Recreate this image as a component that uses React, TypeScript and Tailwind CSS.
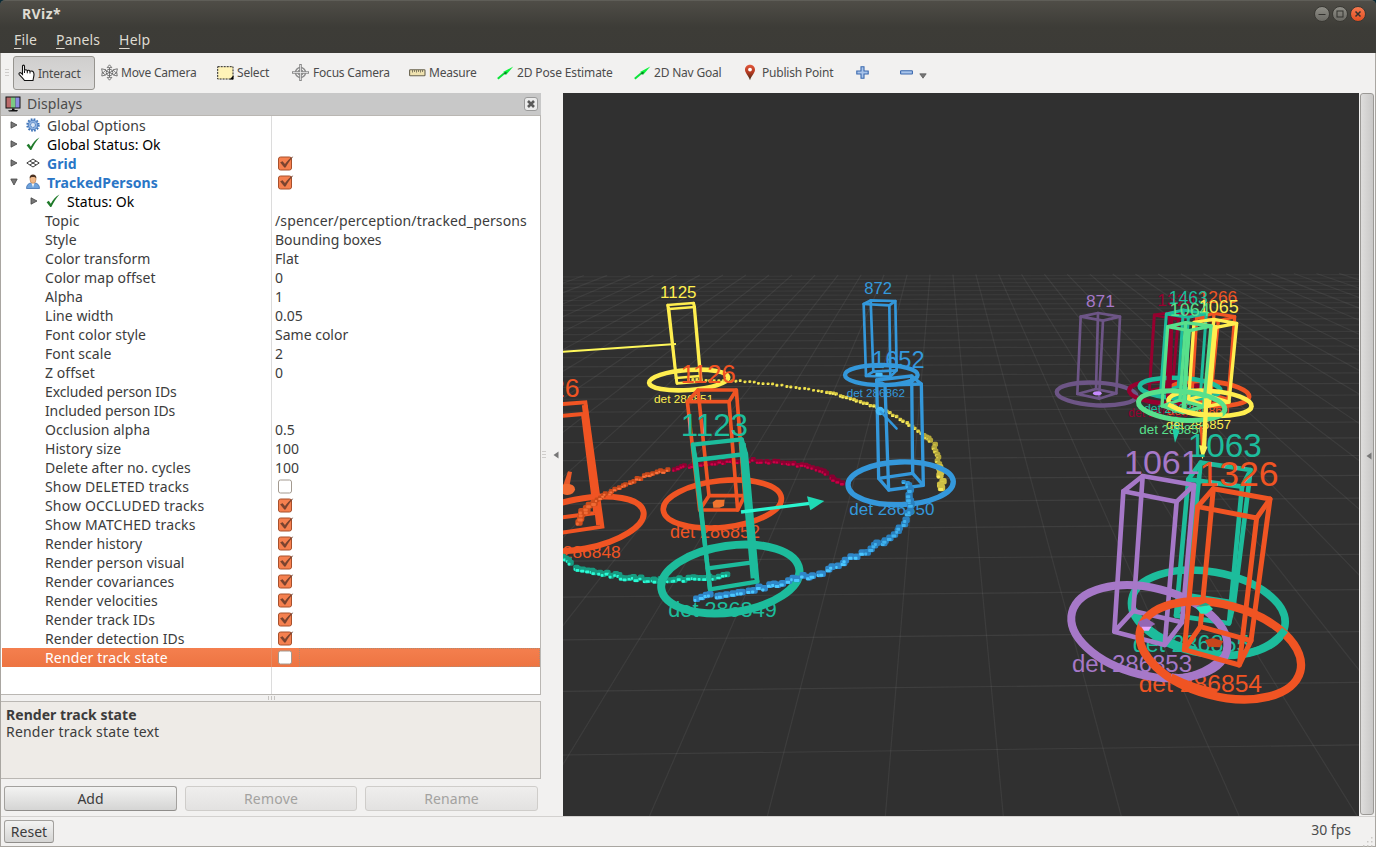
import React from "react";

const UI = "font-['Noto_Sans',sans-serif]";

/* ---------- small icons ---------- */

const Check = () => (
  <svg width="14" height="14" viewBox="0 0 14 14" className="-mt-[2px] shrink-0">
    <path d="M.6 8.300 2.800 6.800 4.800 9.800C6.800 6 9.500 2.700 13.400.5 10 4.500 7.500 8.500 5.300 13H4.300Z" fill="#1f7a2a" />
  </svg>
);

const Gear = () => (
  <svg width="14" height="14" viewBox="0 0 14 14" className="-mt-[2px] shrink-0">
    <circle cx="7" cy="7" r="5.700" fill="none" stroke="#3f74b8" strokeWidth="2" strokeDasharray="1.700 1.284" />
    <circle cx="7" cy="7" r="4.800" fill="#8fb2e0" stroke="#4a7cc0" strokeWidth="1" />
    <circle cx="7" cy="7" r="2.400" fill="#dbe7f6" stroke="#4a7cc0" strokeWidth="1" strokeDasharray="1.500 .6" />
  </svg>
);

const GridIcon = () => (
  <svg width="14" height="14" viewBox="0 0 14 14" className="-mt-[2px] shrink-0" fill="none" stroke="#3c3c3c">
    <path d="M.8 7 7 3 13.200 7 7 11ZM3.900 5 10.100 9M10.100 5 3.900 9" strokeWidth="1" />
  </svg>
);

const Person = () => (
  <svg width="14" height="16" viewBox="0 0 14 16" className="-mt-[2px] shrink-0">
    <path d="M.5 14.500C.5 11 2.500 9.300 5 9L7 10.500 9 9C11.500 9.300 13.500 11 13.500 14.500Z" fill="#6fa3dc" stroke="#3d6fb0" strokeWidth=".8" />
    <path d="M5.300 8.500h3.400L7 13.500Z" fill="#f4f4f4" />
    <ellipse cx="7" cy="5.300" rx="3" ry="4" fill="#f0b98a" stroke="#b97a45" strokeWidth=".6" />
    <path d="M3.600 4.600C3.400 1.800 5 .6 7 .6S10.600 1.800 10.400 4.600C9.500 3 8.500 3 7 3S4.500 3 3.600 4.600Z" fill="#4a3222" />
  </svg>
);

const Right = () => (
  <svg width="8" height="8" viewBox="0 0 8 8" className="-mt-px shrink-0">
    <path d="M1 .8 7 4 1 7.200Z" fill="#777" stroke="#444" strokeWidth=".8" />
  </svg>
);
const Down = () => (
  <svg width="8" height="8" viewBox="0 0 8 8" className="-mt-[2px] shrink-0">
    <path d="M.8 1h6.400L4 7Z" fill="#777" stroke="#444" strokeWidth=".8" />
  </svg>
);

const Box = ({ on }: { on: boolean }) => (
  <svg width="17" height="17" viewBox="0 0 17 17" className="-mt-px block shrink-0">
    <rect x="1.500" y="2" width="13" height="13" rx="2" fill={on ? "#f5804f" : "#fff"} stroke={on ? "#a8502c" : "#a39a90"} />
    {on && (
      <path d="M3.500 7.500 5.500 6.500 8 9.500C9.800 6.800 12 4.200 15.800 1.800 12.500 5.500 10.200 9 8.400 12.300H7.400Z" fill="#7a4330" stroke="#5e3526" strokeWidth=".4" />
    )}
  </svg>
);

const Monitor = () => (
  <svg width="17" height="17" viewBox="0 0 17 17">
    <rect x=".5" y=".5" width="15" height="12" fill="#111" />
    <path d="M1.500 1.500H6V11.500H1.500Z" fill="#b96a6a" />
    <path d="M6 1.500h4.500V11.500H6Z" fill="#7cc983" />
    <path d="M10.500 1.500h4V11.500h-4Z" fill="#8b8be0" />
    <path d="M7 12.500h2.500V14H13l-1 1.500H4L3 14.500 7 14Z" fill="#111" />
  </svg>
);

const Hand = () => (
  <svg width="17" height="18" viewBox="0 0 17 18">
    <path
      d="M4.500 9.500V2.200C4.500 .8 6.500 .8 6.500 2.200V6.500C7 5.500 9 5.500 9.300 6.800 10 5.900 11.700 6.200 12 7.400 13 6.700 15 7 15.500 8.200L16 10C16 12.500 15.500 13 15 16.500H6.500C5 14 2.500 12 1.200 10.500.5 9 2 8 3.200 9.200L4.500 10.500Z"
      fill="#fff"
      stroke="#111"
      strokeWidth="1.100"
    />
    <path d="M6.500 6.500V9M9.300 7V9.300M12 7.400V9.500" stroke="#111" fill="none" />
  </svg>
);

const Move = () => (
  <svg width="17" height="17" viewBox="0 0 17 17" fill="#f7f7f7" stroke="#5a5a5a" strokeWidth=".8">
    <path d="M8.500 .8 10.800 3.600H6.200ZM8.500 16.200 6.200 13.400h4.600Z" />
    <path d="M.6 4.800 5 5.800 1.600 9.200ZM16.400 4.800 12 5.800 15.400 9.200Z" />
    <path d="M.8 12 1.200 8.600 4.600 11ZM16.200 12 15.800 8.600 12.400 11Z" />
    <circle cx="8.500" cy="8.500" r="3.300" />
    <path d="M4.500 6.700 12.500 10.300M12.500 6.700 4.500 10.300M8.500 4V13" fill="none" />
  </svg>
);

const SelectIcon = () => (
  <svg width="17" height="14" viewBox="0 0 17 14">
    <rect x=".7" y=".7" width="15.300" height="12.300" fill="#fff3b8" stroke="#222" strokeWidth="1" strokeDasharray="2 1" />
    <path d="M16.500 9.500V13.500H12.500Z" fill="#000" />
  </svg>
);

const Focus = () => (
  <svg width="17" height="17" viewBox="0 0 17 17" fill="none" stroke="#8a8a8a">
    <circle cx="8.500" cy="8.500" r="5" strokeWidth="1.400" />
    <circle cx="8.500" cy="8.500" r="2.500" strokeWidth="1.100" />
    <path d="M8.500 0V17M0 8.500H17" strokeWidth="2.600" />
    <path d="M8.500 1V16M1 8.500H16" stroke="#eee" strokeWidth=".8" />
  </svg>
);

const Ruler = () => (
  <svg width="17" height="8" viewBox="0 0 17 8">
    <rect x=".6" y=".8" width="15.400" height="6" rx=".8" fill="#efe2b0" stroke="#6a6450" strokeWidth="1.100" />
    <path d="M3.500 1V3.500M5.500 1V3M7.500 1V3.500M9.500 1V3M11.500 1V3.500M13.500 1V3" stroke="#6a6450" strokeWidth=".8" />
  </svg>
);

const GreenArrow = () => (
  <svg width="17" height="14" viewBox="0 0 17 14">
    <path d="M.8 12.800 7 7.500" stroke="#0be33a" strokeWidth="2" />
    <path d="M6 6 16.300 .6 9.200 8.800Z" fill="#0bf23a" />
    <path d="M6.500 8 8 6 10 6.200 8.600 8.400Z" fill="#0a7c26" />
  </svg>
);

const Pin = () => (
  <svg width="12" height="17" viewBox="0 0 12 17">
    <defs>
      <linearGradient id="pin" x1="0" y1="0" x2="0" y2="1">
        <stop offset="0" stopColor="#e2573a" />
        <stop offset=".5" stopColor="#b23a22" />
        <stop offset="1" stopColor="#3c2a14" />
      </linearGradient>
    </defs>
    <path d="M6 .8C3 .8 1 3 1 5.800 1 9 4.500 11.500 6 16.300 7.500 11.500 11 9 11 5.800 11 3 9 .8 6 .8Z" fill="url(#pin)" />
    <circle cx="6" cy="5.600" r="1.900" fill="#fff" />
  </svg>
);

const Plus = () => (
  <svg width="13" height="13" viewBox="0 0 13 13">
    <path d="M5 .8h3V5h4.200v3H8v4.200H5V8H.8V5H5Z" fill="#a9c4ea" stroke="#3a68ae" strokeWidth="1.100" />
  </svg>
);
const Minus = () => (
  <svg width="13" height="5" viewBox="0 0 13 5" className="block">
    <rect x=".6" y=".8" width="11.800" height="3.200" rx=".5" fill="#a9c4ea" stroke="#3a68ae" strokeWidth="1.100" />
  </svg>
);

/* ---------- property tree ---------- */

type Row = {
  label: string;
  value?: string;
  check?: boolean;
  kind?: "options" | "status" | "grid" | "persons" | "substatus";
};

const rows: Row[] = [
  { label: "Global Options", kind: "options" },
  { label: "Global Status: Ok", kind: "status" },
  { label: "Grid", kind: "grid", check: true },
  { label: "TrackedPersons", kind: "persons", check: true },
  { label: "Status: Ok", kind: "substatus" },
  { label: "Topic", value: "/spencer/perception/tracked_persons" },
  { label: "Style", value: "Bounding boxes" },
  { label: "Color transform", value: "Flat" },
  { label: "Color map offset", value: "0" },
  { label: "Alpha", value: "1" },
  { label: "Line width", value: "0.05" },
  { label: "Font color style", value: "Same color" },
  { label: "Font scale", value: "2" },
  { label: "Z offset", value: "0" },
  { label: "Excluded person IDs" },
  { label: "Included person IDs" },
  { label: "Occlusion alpha", value: "0.5" },
  { label: "History size", value: "100" },
  { label: "Delete after no. cycles", value: "100" },
  { label: "Show DELETED tracks", check: false },
  { label: "Show OCCLUDED tracks", check: true },
  { label: "Show MATCHED tracks", check: true },
  { label: "Render history", check: true },
  { label: "Render person visual", check: true },
  { label: "Render covariances", check: true },
  { label: "Render velocities", check: true },
  { label: "Render track IDs", check: true },
  { label: "Render detection IDs", check: true },
  { label: "Render track state", check: false },
];

const TreeRow = ({ row, selected }: { row: Row; selected: boolean }) => {
  const pad = !row.kind ? "pl-[43px]" : row.kind === "substatus" ? "pl-[28px]" : "pl-[8px]";
  const tone = selected
    ? "text-white"
    : row.kind === "status" || row.kind === "substatus"
      ? "text-black"
      : row.kind === "grid" || row.kind === "persons"
        ? "font-bold text-[#2a76c6]"
        : "text-[#3c3c3c]";
  const tracking = row.label.startsWith("Show") || row.label.startsWith("Render track state")
    ? "tracking-[0.16px]"
    : row.label.endsWith("person IDs")
      ? "tracking-[-0.13px]"
      : "tracking-[0.05px]";
  return (
    <div className={`flex h-[19px] shrink-0 ${selected ? "bg-linear-to-b from-[#f47f4e] to-[#ed7442]" : ""}`}>
      <div className={`flex w-[269px] items-center ${pad} ${tone} ${tracking}`}>
        {row.kind && (
          <span className="mr-[7px] flex items-center gap-[8px]">
            {row.kind === "persons" ? <Down /> : <Right />}
            {row.kind === "options" && <Gear />}
            {(row.kind === "status" || row.kind === "substatus") && <Check />}
            {row.kind === "grid" && <GridIcon />}
            {row.kind === "persons" && <Person />}
          </span>
        )}
        <span className="whitespace-nowrap">{row.label}</span>
      </div>
      <div className={`w-px ${selected ? "bg-[#e58a62]" : "bg-[#dcdcdc]"}`} />
      <div className="flex flex-1 items-center pl-[3px] text-[#3c3c3c]">
        {row.value && (
          <span className={`whitespace-nowrap ${row.value.length > 20 ? "tracking-[0.14px]" : ""}`}>{row.value}</span>
        )}
        {row.check !== undefined && (
          <span className="pl-[2px]">
            <Box on={row.check} />
          </span>
        )}
        {selected && <span className="ml-[5px] h-[19px] flex-1 border border-dotted border-[#b08a72]" />}
      </div>
    </div>
  );
};

/* ---------- 3D view ---------- */

type P = [number, number];

const noise = (i: number) => {
  const s = Math.sin(i * 127.1 + 11.7) * 43758.5453;
  return s - Math.floor(s);
};

const Trail = ({ pts, size, gap, dark, light, jitter = 0.5 }: { pts: P[]; size: number; gap: number; dark: string; light: string; jitter?: number }) => {
  const out: React.ReactNode[] = [];
  let n = 0;
  for (let i = 0; i < pts.length - 1; i++) {
    const [x0, y0] = pts[i];
    const [x1, y1] = pts[i + 1];
    const steps = Math.max(1, Math.round(Math.hypot(x1 - x0, y1 - y0) / gap));
    for (let k = 0; k < steps; k++) {
      const x = x0 + ((x1 - x0) * k) / steps + (noise(n) - 0.5) * size * jitter;
      const y = y0 + ((y1 - y0) * k) / steps + (noise(n + 500) - 0.5) * size * jitter;
      const lit = 0.35 + noise(n + 900) * 0.5;
      out.push(
        <g key={n}>
          <rect x={x - size * 0.55} y={y - size * 0.5} width={size * 1.1} height={size} rx={size * 0.3} fill={dark} />
          <rect x={x - size * 0.45} y={y + size * 0.02} width={size * lit} height={size * 0.45} rx={size * 0.12} fill={light} />
        </g>,
      );
      n++;
    }
  }
  return <g>{out}</g>;
};

/* Wireframe box: four top corners and the four floor corners below them. */
const Wire = ({ t, b, c, w }: { t: P[]; b: P[]; c: string; w: number }) => {
  const s = (q: P[]) => q.map((p) => p.join(",")).join(" ");
  return (
    <g fill="none" stroke={c} strokeWidth={w} strokeLinejoin="round" strokeLinecap="round">
      <polygon points={s(t)} />
      <polygon points={s(b)} />
      {t.map((p, i) => (
        <line key={i} x1={p[0]} y1={p[1]} x2={b[i][0]} y2={b[i][1]} />
      ))}
    </g>
  );
};

const Ring = ({ x, y, rx, ry, r = 0, c, w }: { x: number; y: number; rx: number; ry: number; r?: number; c: string; w: number }) => (
  <ellipse cx={x} cy={y} rx={rx} ry={ry} transform={`rotate(${r} ${x} ${y})`} fill="none" stroke={c} strokeWidth={w} />
);

const T = ({ x, y, s, c, end, children }: { x: number; y: number; s: number; c: string; end?: boolean; children: string }) => (
  <text x={x} y={y} fontSize={s} fill={c} textAnchor={end ? "end" : "start"} fontFamily="Liberation Sans, sans-serif">
    {children}
  </text>
);

const YEL = "#ffee4f";
const ORG = "#f05423";
const TEAL = "#1dbc9c";
const BLUE = "#3498db";
const PUR = "#a678c8";
const DIM = "#6d5586";
const CRI = "#96002f";
const GRN = "#58e08c";

const GridFloor = () => {
  const h: React.ReactNode[] = [];
  for (let n = -1; n < 32; n++) {
    const d = 1 / (0.001653 + 0.000192 * n);
    const slope = 0.000021 * d;
    const y = 144 + d;
    h.push(<line key={n} x1={563} x2={1359} y1={y + 477 * slope} y2={y - 319 * slope} strokeOpacity={Math.min(0.13, 0.05 + d * 0.00028)} />);
  }
  const v: React.ReactNode[] = [];
  for (let n = -24; n < 24; n++) {
    const m = 0.093 + 0.1755 * n;
    const far = 130.5 - m * 0.35;
    v.push(<line key={n} x1={940.8 + m * far} y1={144 + far} x2={940.8 + m * 676} y2={820} strokeOpacity=".115" />);
  }
  return (
    <g stroke="#a0a0a0" strokeWidth="1.200">
      {h}
      {v}
    </g>
  );
};

const Scene = () => (
  <svg width="796" height="723" viewBox="563 93 796 723" className="block">
    <rect x="563" y="93" width="796" height="723" fill="#303030" />
    <GridFloor />

    {/* upper left and centre tracks */}
    <g transform="translate(660 270) scale(.33333)">
      {/* 1125 */}
      <T x={0} y={84} s={51} c={YEL}>1125</T>
      <line x1="-300" y1="246" x2="48" y2="222" stroke="#fff85a" strokeWidth="6" />
      <Wire t={[[23, 105], [101, 99], [104, 111], [27, 117]]} b={[[48, 324], [120, 318], [124, 334], [51, 340]]} c={YEL} w={8} />
      <T x={-18} y={399} s={35.500} c={YEL}>det 286851</T>
      <Ring x={86} y={330} rx={119} ry={30} r={-4} c={YEL} w={14} />
      <Trail size={8} gap={13} dark="#e6d742" light="#fff46a" jitter={0.4} pts={[[85, 328], [240, 333], [310, 340], [380, 348], [500, 366]]} />
      <Trail size={10} gap={11} dark="#d9ca42" light="#fff46a" jitter={0.4} pts={[[500, 366], [560, 381], [610, 398], [680, 424], [740, 458], [790, 495]]} />
      <Trail size={15} gap={10} dark="#b3a63c" light="#e6d850" pts={[[790, 495], [822, 520], [832, 560], [837, 590]]} />
      <Trail size={20} gap={9} dark="#cfc044" light="#f7e95c" pts={[[837, 590], [844, 620], [845, 660]]} />

      {/* partial track at the left border */}
      <T x={-241} y={380} s={80} c={ORG} end>1226</T>
      <g fill="none" stroke={ORG} strokeWidth="12">
        <path d="M-300 403-224 397-173 770-300 789M-300 438-231 432M-300 743-194 729M-231 432-194 729" />
        <path d="M-226 405-183 765" strokeWidth="17" />
      </g>
      <path d="M-276 604-264 606-272 650-290 645Z" fill="#e8592a" />
      <ellipse cx="-278" cy="658" rx="23" ry="17" fill="#f06a32" />
      <T x={-118} y={863} s={52} c={ORG} end>det 286848</T>
      <Ring x={-238} y={762} rx={192} ry={75} r={-11} c={ORG} w={18} />
      <Trail size={20} gap={11} dark="#cf4d1c" light="#f06a34" pts={[[-245, 755], [-230, 728], [-212, 702], [-190, 688]]} />
      <Trail size={14} gap={11} dark="#c9481a" light="#f7733e" pts={[[-190, 688], [-170, 680], [-135, 655], [-80, 632], [-20, 608], [35, 600]]} />

      <Trail size={14} gap={12} dark="#8f0031" light="#d0004a" pts={[[42, 597], [110, 582], [200, 575], [280, 571], [380, 578], [470, 595]]} />
      <Trail size={16} gap={12} dark="#850030" light="#c80046" pts={[[470, 595], [555, 642]]} />

      {/* 1126 */}
      <T x={62} y={340} s={77} c={ORG}>1126</T>
      <Wire t={[[82, 395], [114, 360], [229, 360], [207, 395]]} b={[[119, 720], [147, 677], [254, 677], [233, 720]]} c={ORG} w={11} />
      <T x={30} y={803} s={54} c={ORG}>det 286852</T>
      <Ring x={187} y={702} rx={178} ry={70} r={-6} c={ORG} w={17} />
      <path d="M158 697 168 689H194L192 708 178 713H160Z" fill="#f0742f" />

      {/* teal history and 1123 */}
      <Trail size={18} gap={12} dark="#179a80" light="#2afbd5" pts={[[-294, 858], [-255, 890], [-160, 912], [-90, 924], [0, 930], [60, 928], [160, 922]]} />
      <T x={62} y={497} s={94} c={TEAL}>1123</T>
      <T x={25} y={1040} s={65} c={TEAL}>det 286849</T>
      <Wire t={[[99, 524], [245, 508], [258, 552], [107, 570]]} b={[[143, 895], [278, 877], [292, 935], [150, 958]]} c={TEAL} w={13} />
      <path d="M247 520 282 925" stroke={TEAL} strokeWidth="20" />
      <Ring x={211} y={927} rx={209} ry={100} r={-8} c={TEAL} w={24} />
      <Trail size={17} gap={16} dark="#1a9a82" light="#2afbd5" pts={[[160, 922], [220, 915]]} />
      <path d="M243 726 450 700" stroke="#2bf5cf" strokeWidth="10" />
      <path d="M441 679 493 693 451 721Z" fill="#1fd9b4" />

      {/* 872 */}
      <T x={613} y={73} s={50} c={BLUE}>872</T>
      <Wire t={[[611, 102], [632, 91], [706, 93], [688, 106]]} b={[[618, 318], [640, 305], [710, 301], [691, 320]]} c={BLUE} w={8} />
      <T x={560} y={381} s={35} c={BLUE}>det 286862</T>
      <Ring x={664} y={315} rx={109} ry={30} c={BLUE} w={13} />
      <rect x="646" y="308" width="22" height="11" rx="4" fill="#45b8f5" />

      {/* 1652 */}
      <T x={636} y={295} s={71} c={BLUE}>1652</T>
      <Wire t={[[650, 330], [755, 318], [784, 342], [675, 345]]} b={[[656, 625], [758, 610], [790, 646], [686, 660]]} c={BLUE} w={10} />
      <circle cx="660" cy="423" r="13" fill="#45b8f5" />
      <path d="M662 425 710 476" stroke={BLUE} strokeWidth="7" strokeLinecap="round" />
      <T x={568} y={735} s={51} c={BLUE}>det 286850</T>
      <Ring x={722} y={640} rx={158} ry={64} r={-2} c={BLUE} w={16} />
      <Trail size={20} gap={15} dark="#2f86c8" light="#4bc8ff" pts={[[108, 984], [200, 970], [280, 958], [340, 945], [430, 920], [490, 908], [560, 870], [620, 845]]} />
      <Trail size={20} gap={13} dark="#2a80be" light="#3fb2ee" pts={[[620, 845], [690, 800], [730, 760], [748, 720], [750, 660], [742, 640]]} />
      <Trail size={12} gap={10} dark="#2f8fd0" light="#3fb2ee" pts={[[742, 638], [718, 635]]} />
    </g>

    {/* upper right cluster */}
    <g transform="translate(1040 270) scale(.33333)">
      <T x={138} y={110} s={52} c={PUR}>871</T>
      <Wire t={[[122, 140], [174, 129], [240, 140], [189, 152]]} b={[[112, 372], [168, 357], [229, 370], [177, 386]]} c={DIM} w={8} />
      <Ring x={170} y={372} rx={120} ry={34} r={3} c={DIM} w={13} />
      <ellipse cx="172" cy="370" rx="13" ry="6" fill="#c68aff" />

      <T x={352} y={108} s={52} c={CRI}>1324</T>
      <T x={265} y={441} s={36} c={CRI}>det 286859</T>
      <Wire t={[[343, 135], [392, 128], [465, 138], [415, 148]]} b={[[328, 362], [380, 350], [450, 362], [394, 388]]} c={CRI} w={9} />
      <Ring x={385} y={367} rx={118} ry={34} r={3} c={CRI} w={13} />

      <T x={476} y={100} s={52} c={ORG}>1266</T>
      <T x={382} y={436} s={37} c={ORG}>det 286860</T>
      <Wire t={[[470, 143], [522, 130], [584, 140], [535, 153]]} b={[[455, 385], [505, 370], [564, 388], [510, 402]]} c={ORG} w={10} />
      <Ring x={508} y={370} rx={120} ry={36} r={5} c={ORG} w={14} />

      <T x={386} y={103} s={53} c={TEAL}>1463</T>
      <T x={312} y={430} s={37} c={TEAL}>det 286861</T>
      <Wire t={[[379, 132], [430, 120], [499, 131], [445, 142]]} b={[[362, 365], [415, 350], [482, 365], [430, 385]]} c={TEAL} w={9} />
      <Ring x={420} y={355} rx={121} ry={31} r={3} c={TEAL} w={14} />

      <path d="M392 148 386 385" stroke={CRI} strokeWidth="16" />
      <path d="M408 440V485" stroke={TEAL} strokeWidth="8" />

      <T x={476} y={130} s={54} c={YEL}>1065</T>
      <T x={378} y={477} s={39} c={YEL}>det 286857</T>
      <Wire t={[[462, 157], [522, 148], [590, 160], [528, 172]]} b={[[446, 388], [498, 375], [567, 396], [500, 410]]} c={YEL} w={10} />
      <path d="M524 165 504 405" stroke={YEL} strokeWidth="17" />
      <Ring x={510} y={400} rx={125} ry={37} r={4} c={YEL} w={14} />

      <T x={389} y={138} s={54} c={GRN}>1064</T>
      <T x={298} y={492} s={40} c={GRN}>det 286856</T>
      <Wire t={[[383, 170], [437, 158], [513, 168], [448, 182]]} b={[[366, 408], [420, 390], [491, 410], [428, 428]]} c={GRN} w={10} />
      <path d="M444 180 432 425" stroke={GRN} strokeWidth="12" />
      <Ring x={425} y={407} rx={130} ry={43} r={5} c={GRN} w={15} />
      <path d="M385 403C420 425 480 436 548 434" stroke={YEL} strokeWidth="13" fill="none" />
      <path d="M397 477 419 482 405 518Z" fill="#20d0a8" />
      <path d="M483 470 487 535" stroke={ORG} strokeWidth="8" />
      <path d="M499 385 492 535" stroke={YEL} strokeWidth="13" />
      <path d="M477 525 503 530 487 568Z" fill="#fff35a" />
    </g>

    {/* lower right cluster */}
    <g transform="translate(1040 430) scale(.33333)">
      <T x={443} y={81} s={100} c={TEAL}>1063</T>
      <T x={278} y={667} s={70} c={TEAL}>det 286855</T>
      <T x={96} y={725} s={72} c={PUR}>det 286853</T>
      <T x={296} y={785} s={74} c={ORG}>det 286854</T>
      <Wire t={[[482, 98], [632, 120], [606, 170], [445, 148]]} b={[[440, 495], [582, 518], [567, 580], [408, 557]]} c={TEAL} w={14} />
      <Ring x={505} y={548} rx={233} ry={123} r={10} c={TEAL} w={23} />
      <Ring x={328} y={605} rx={239} ry={131} r={14} c={PUR} w={24} />
      <path d="M277 535C315 600 370 640 470 662" stroke={TEAL} strokeWidth="22" fill="none" />
      <Wire t={[[308, 138], [462, 165], [410, 215], [250, 184]]} b={[[280, 543], [426, 577], [374, 645], [223, 605]]} c={PUR} w={14} />
      <T x={252} y={131} s={102} c={PUR}>1061</T>
      <Ring x={541} y={661} rx={248} ry={137} r={15} c={ORG} w={25} />
      <path d="M393 741C440 750 500 730 556 678" stroke={PUR} strokeWidth="23" fill="none" />
      <path d="M393 741C440 765 480 778 530 788" stroke={ORG} strokeWidth="22" fill="none" />
      <path d="M735 600C705 640 655 668 600 673" stroke={TEAL} strokeWidth="22" fill="none" />
      <Wire t={[[520, 176], [690, 207], [650, 264], [473, 230]]} b={[[481, 590], [633, 632], [598, 705], [433, 659]]} c={ORG} w={15} />
      <T x={478} y={169} s={107} c={ORG}>1326</T>
      <path d="M468 530 497 518 510 526Z" fill="#1aa88c" />
      <path d="M468 532 508 526 519 537 500 551H482Z" fill="#24e6bd" />
      <path d="M293 576 320 565 346 582 330 592H302Z" fill="#9466b4" />
      <path d="M304 590H334L326 602H312Z" fill="#e6a8ff" />
      <path d="M495 630 520 624 550 634 540 652 505 650Z" fill="#c8451c" />
    </g>
  </svg>
);

/* ---------- chrome ---------- */

const WinBtn = ({ close, children }: { close?: boolean; children: React.ReactNode }) => (
  <span
    className={`flex size-[16px] items-center justify-center rounded-full border border-[#3a3934] ${
      close ? "bg-linear-to-b from-[#f6794f] to-[#e24e20]" : "bg-linear-to-b from-[#8f8e87] to-[#6a6963]"
    }`}
  >
    <svg width="8" height="8" viewBox="0 0 8 8" fill="none" stroke="#33322e" strokeWidth="1">
      {children}
    </svg>
  </span>
);

const Tool = ({ icon, label, className }: { icon: React.ReactNode; label: string; className: string }) => (
  <div className={`flex items-center ${className}`}>
    {icon}
    <span className="whitespace-nowrap">{label}</span>
  </div>
);

const Button = ({ label, disabled, className }: { label: string; disabled?: boolean; className: string }) => (
  <button
    className={`flex items-center justify-center rounded-[3px] border ${className} ${
      disabled
        ? "border-[#cfcdca] bg-linear-to-b from-[#efeeed] to-[#e3e2e1] text-[#a3a2a0]"
        : "border-[#a3a19e] border-b-[#8f8d8a] bg-linear-to-b from-[#f3f3f2] to-[#d5d5d4] text-[#3c3c3c]"
    }`}
  >
    {label}
  </button>
);

export default function App() {
  return (
    <div className={`flex h-[847px] w-[1376px] flex-col overflow-hidden bg-[#0b2a35] text-[14px] leading-[19px] ${UI}`}>
      <header className="flex h-[53px] shrink-0 flex-col rounded-t-[5px] border-t border-[#5f5e58] bg-linear-to-b from-[#4f4d47] via-[#3d3c37] via-50% to-[#3c3b37]">
        <div className="flex h-[26px] items-center justify-between pr-[10px] pl-[22px]">
          <span className="text-[14px] font-bold tracking-[0.4px] text-[#dfdbd2]">RViz*</span>
          <div className="flex gap-[2px]">
            <WinBtn><path d="M.5 4.500H7.500" /></WinBtn>
            <WinBtn><rect x="1" y="1" width="6" height="6" /></WinBtn>
            <WinBtn close><path d="M1.500 1.500 6.500 6.500M6.500 1.500 1.500 6.500" strokeWidth="1.500" /></WinBtn>
          </div>
        </div>
        <nav className="flex gap-[19px] pl-[14px] leading-[27px] tracking-[0.15px] text-[#dfdbd2]">
          {["File", "Panels", "Help"].map((m) => (
            <span key={m}>
              <span className="underline underline-offset-[3px]">{m[0]}</span>
              {m.slice(1)}
            </span>
          ))}
        </nav>
      </header>

      <div className="flex min-h-0 flex-1 flex-col border-r border-b border-l border-[#a9a6a1] bg-[#f2f1f0]">
        <div className="flex h-[39px] shrink-0 items-center text-[12px] tracking-[-0.2px] text-[#4c4c4c]">
          <div className="ml-[4px] flex w-[4px] flex-col gap-[2px]">
            <i className="h-px bg-[#cfcdcb]" />
            <i className="h-px bg-[#cfcdcb]" />
            <i className="h-px bg-[#cfcdcb]" />
          </div>
          <Tool
            icon={<Hand />}
            label="Interact"
            className="mt-px ml-[4px] h-[34px] w-[82px] gap-[3px] rounded-[3px] border border-[#96948f] bg-linear-to-b from-[#cfcecd] to-[#dddcdb] pl-[4px]"
          />
          <Tool icon={<Move />} label="Move Camera" className="ml-[6px] w-[116px] gap-[3px]" />
          <Tool icon={<SelectIcon />} label="Select" className="w-[75px] gap-[3px]" />
          <Tool icon={<Focus />} label="Focus Camera" className="w-[117px] gap-[4px]" />
          <Tool icon={<Ruler />} label="Measure" className="w-[88px] gap-[3px]" />
          <Tool icon={<GreenArrow />} label="2D Pose Estimate" className="w-[137px] gap-[3px] tracking-[-0.14px]" />
          <Tool icon={<GreenArrow />} label="2D Nav Goal" className="w-[110px] gap-[3px]" />
          <Tool icon={<Pin />} label="Publish Point" className="w-[112px] gap-[6px]" />
          <Plus />
          <span className="ml-[31px]"><Minus /></span>
          <svg width="8" height="6" viewBox="0 0 8 6" className="mt-[7px] ml-[6px]"><path d="M.8.8h6.400L4 5.200Z" fill="#777" stroke="#555" strokeWidth=".7" /></svg>
        </div>

        <div className="flex h-[725px] shrink-0 border-b border-[#d3d1cf] pt-px">
          <aside className="flex w-[540px] shrink-0 flex-col">
            <div className="flex h-[22px] shrink-0 items-center bg-[#c8c8c8] pr-[3px] pl-[4px] text-[#4c4c4c]">
              <Monitor />
              <span className="-mt-px ml-[5px] flex-1 tracking-[0.1px]">Displays</span>
              <span className="flex size-[14px] items-center justify-center rounded-[3px] border border-[#9a9a9a] bg-[#ececec]">
                <svg width="8" height="8" viewBox="0 0 8 8"><path d="M1 1 7 7M7 1 1 7" stroke="#5a5a5a" strokeWidth="2.600" /></svg>
              </span>
            </div>
            <div className="flex h-[580px] shrink-0 flex-col border-t border-r border-b border-[#bab7b3] bg-white pl-px">
              {rows.map((r, i) => (
                <TreeRow key={r.label} row={r} selected={i === rows.length - 1} />
              ))}
              <div className="ml-[269px] w-px flex-1 bg-[#dcdcdc]" />
            </div>
            <div className="flex h-[6px] shrink-0 items-center justify-center gap-[2px]">
              <i className="h-[4px] w-px bg-[#c6c4c1]" />
              <i className="h-[4px] w-px bg-[#c6c4c1]" />
              <i className="h-[4px] w-px bg-[#c6c4c1]" />
            </div>
            <div className="h-[78px] shrink-0 border border-l-0 border-[#bab7b3] bg-[#eeebe7] px-[5px] pt-[4px] leading-[17px] text-[#3c3c3c]">
              <p className="font-bold tracking-[0.05px]">Render track state</p>
              <p className="tracking-[0.2px]">Render track state text</p>
            </div>
            <div className="flex gap-[8px] pt-[7px] pl-[3px]">
              <Button label="Add" className="h-[25px] w-[173px]" />
              <Button label="Remove" disabled className="h-[25px] w-[172px] tracking-[0.2px]" />
              <Button label="Rename" disabled className="h-[25px] w-[173px] tracking-[0.1px]" />
            </div>
          </aside>
          <div className="flex w-[22px] items-center pl-px">
            <div className="flex flex-col gap-[2px]">
              <i className="h-px w-[4px] bg-[#cfcdcb]" />
              <i className="h-px w-[4px] bg-[#cfcdcb]" />
              <i className="h-px w-[4px] bg-[#cfcdcb]" />
            </div>
            <svg width="6" height="8" viewBox="0 0 6 8" className="ml-[7px]"><path d="M5.500.5V7.500L.5 4Z" fill="#777" /></svg>
          </div>
          <Scene />
          <div className="ml-px flex h-[722px] w-[14px] items-center justify-center rounded-[3px] border border-[#9b9996] bg-linear-to-r from-[#dedddc] to-[#c9c8c7]">
            <svg width="6" height="8" viewBox="0 0 6 8" className="mt-[3px] ml-[3px]"><path d="M5.500.5V7.500L.5 4Z" fill="#777" /></svg>
          </div>
        </div>

        <footer className="flex flex-1 items-start justify-between pt-[3px] pr-[2px] pl-[3px]">
          <Button label="Reset" className="h-[23px] w-[50px]" />
          <div className="flex h-full items-end">
            <span className="mr-[12px] mb-[9px] text-[#4c4c4c]">30 fps</span>
            <svg width="10" height="10" viewBox="0 0 10 10" className="mb-px" fill="#cbc9c6">
              <path d="M8 0h1.500v1.500H8zM8 4h1.500v1.500H8zM4 4h1.500v1.500H4zM8 8h1.500v1.500H8zM4 8h1.500v1.500H4zM0 8h1.500v1.500H0z" />
            </svg>
          </div>
        </footer>
      </div>
    </div>
  );
}
